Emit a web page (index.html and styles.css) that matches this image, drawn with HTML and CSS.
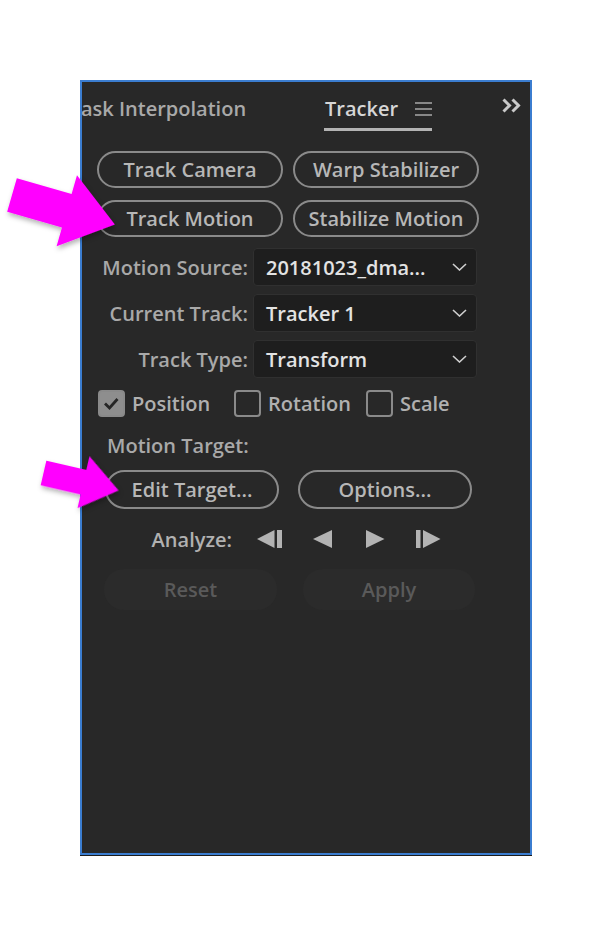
FILE: index.html
```html
<!DOCTYPE html>
<html lang="en">
<head>
<meta charset="utf-8">
<title>Tracker</title>
<link rel="stylesheet" href="styles.css">
</head>
<body>
<div class="panel">
  <div class="tabs">
    <div class="tab tab-inactive">ask Interpolation</div>
    <div class="tab tab-active">
      <span>Tracker</span>
      <svg class="menu-icon" width="17" height="14" viewBox="0 0 17 14"><path d="M0 1h17M0 7h17M0 13h17" stroke="#a8a8a8" stroke-width="1.4" fill="none"/></svg>
    </div>
    <div class="more">
      <svg width="21" height="15" viewBox="0 0 21 15"><path d="M1.5 1.5l6 6-6 6M10.5 1.5l6 6-6 6" stroke="#c9c9c9" stroke-width="3" fill="none" stroke-linejoin="miter"/></svg>
    </div>
  </div>

  <div class="content">
    <div class="row r1">
      <button class="pill">Track Camera</button>
      <button class="pill">Warp Stabilizer</button>
    </div>
    <div class="row r2">
      <button class="pill">Track Motion</button>
      <button class="pill">Stabilize Motion</button>
    </div>

    <div class="fields">
      <div class="field">
        <span class="field-label">Motion Source:</span>
        <div class="select"><span>20181023_dma...</span><svg width="15" height="8" viewBox="0 0 15 8"><path d="M1 1l6.5 6 6.5-6" stroke="#cfcfcf" stroke-width="1.6" fill="none"/></svg></div>
      </div>
      <div class="field">
        <span class="field-label">Current Track:</span>
        <div class="select"><span>Tracker 1</span><svg width="15" height="8" viewBox="0 0 15 8"><path d="M1 1l6.5 6 6.5-6" stroke="#cfcfcf" stroke-width="1.6" fill="none"/></svg></div>
      </div>
      <div class="field">
        <span class="field-label">Track Type:</span>
        <div class="select"><span>Transform</span><svg width="15" height="8" viewBox="0 0 15 8"><path d="M1 1l6.5 6 6.5-6" stroke="#cfcfcf" stroke-width="1.6" fill="none"/></svg></div>
      </div>
    </div>

    <div class="checks">
      <label class="check check-pos"><span class="box on"><svg width="23" height="23" viewBox="0 0 23 23"><path d="M5 11.5l4.5 4.5 8-9" stroke="#262626" stroke-width="2.8" fill="none"/></svg></span>Position</label>
      <label class="check check-rot"><span class="box"></span>Rotation</label>
      <label class="check"><span class="box"></span>Scale</label>
    </div>

    <div class="target-label">Motion Target:</div>

    <div class="row r3">
      <button class="pill pill-sm">Edit Target...</button>
      <button class="pill pill-sm">Options...</button>
    </div>

    <div class="analyze">
      <span class="analyze-label">Analyze:</span>
      <svg width="184" height="20" viewBox="0 0 184 20" fill="#b3b3b3">
        <path d="M0 10L17.5 1v18z"/><rect x="20" y="1" width="5" height="18"/>
        <path d="M56 10L75 1v18z"/>
        <path d="M109 1l18.5 9-18.5 9z"/>
        <rect x="159" y="1" width="4.5" height="18"/><path d="M166 1l17.5 9-17.5 9z"/>
      </svg>
    </div>

    <div class="row r4">
      <button class="ghost ghost-reset">Reset</button>
      <button class="ghost ghost-apply">Apply</button>
    </div>
  </div>
</div>

<svg class="arrows" width="612" height="935" viewBox="0 0 612 935">
  <defs>
    <filter id="sh" x="-20%" y="-20%" width="140%" height="160%">
      <feDropShadow dx="1" dy="3" stdDeviation="2.5" flood-color="#000" flood-opacity="0.3"/>
    </filter>
  </defs>
  <g filter="url(#sh)" fill="#ff00ff">
    <path transform="translate(12 195) rotate(16)" d="M0 -17.5H57V-37L107 0L57 37V17.5H0Z"/>
    <path transform="translate(43.5 473) rotate(13) scale(0.72)" d="M0 -17.5H57V-37L107 0L57 37V17.5H0Z"/>
  </g>
</svg>
</body>
</html>
```

FILE: styles.css
```css
html, body {
  margin: 0;
  padding: 0;
  background: #ffffff;
}

body {
  font-family: "Open Sans", "Liberation Sans", sans-serif;
  font-size: 20px;
  font-weight: 600;
  position: relative;
  min-height: 935px;
}

.panel {
  margin: 80px 0 0 80px;
  width: 448px;
  height: 771px;
  border: 2px solid #3b7dd0;
  background: #282828;
  overflow: hidden;
  box-shadow: 0 1px 0 #1c1c1c;
}

/* ---- tab bar ---- */
.tabs {
  display: flex;
  height: 49px;
}

.tab {
  box-sizing: border-box;
  height: 49px;
  display: flex;
  align-items: center;
  padding-top: 6px;
  padding-bottom: 3px;
  white-space: nowrap;
}

.tab-inactive {
  width: 243px;
  margin-left: -1px;
  color: #a9a9a9;
}

.tab-active {
  width: 108px;
  padding-left: 1px;
  justify-content: space-between;
  color: #d6d6d6;
  border-bottom: 3px solid #b3b3b3;
  padding-bottom: 0;
}

.menu-icon {
  margin-top: 1px;
}

.more {
  margin-left: auto;
  padding-right: 7px;
  padding-top: 16px;
}

.more svg {
  display: block;
}

/* ---- content ---- */
.content {
  padding-left: 15px;
}

.row {
  display: flex;
}

.pill {
  box-sizing: border-box;
  width: 186px;
  height: 37px;
  padding: 0;
  border: 2px solid #8a8a8a;
  border-radius: 19px;
  background: transparent;
  color: #b7b7b7;
  font-family: inherit;
  font-size: 20px;
  font-weight: inherit;
  display: flex;
  align-items: center;
  justify-content: center;
}

.r1 {
  margin-top: 20px;
  gap: 10px;
}

.r2 {
  margin-top: 12px;
  gap: 10px;
}

.fields {
  margin-top: 11px;
  display: flex;
  flex-direction: column;
  gap: 8px;
}

.field {
  display: flex;
  align-items: center;
  gap: 5px;
  height: 38px;
}

.field-label {
  width: 151px;
  text-align: right;
  color: #a9a9a9;
  white-space: nowrap;
}

.select {
  box-sizing: border-box;
  width: 224px;
  height: 38px;
  background: #1e1e1e;
  border: 1px solid #303030;
  border-radius: 4px;
  display: flex;
  align-items: center;
  justify-content: space-between;
  padding: 0 9px 0 12px;
  color: #e3e3e3;
  white-space: nowrap;
}

.checks {
  margin-top: 12px;
  margin-left: 1px;
  display: flex;
  align-items: center;
  height: 27px;
}

.check {
  display: flex;
  align-items: center;
  gap: 7px;
  color: #b0b0b0;
  white-space: nowrap;
}

.check-pos {
  width: 136px;
}

.check-rot {
  width: 132px;
}

.box {
  box-sizing: border-box;
  width: 27px;
  height: 27px;
  border: 2px solid #8a8a8a;
  border-radius: 4px;
  display: flex;
  align-items: center;
  justify-content: center;
  flex: none;
}

.box.on {
  background: #8e8e8e;
}

.target-label {
  margin-top: 15px;
  padding-left: 10px;
  height: 28px;
  line-height: 28px;
  color: #a9a9a9;
}

.r3 {
  margin-top: 10px;
  margin-left: 8px;
  gap: 19px;
}

.pill-sm {
  width: 174px;
  height: 39px;
  border-radius: 20px;
}

.analyze {
  margin-top: 20px;
  height: 20px;
  display: flex;
  align-items: center;
}

.analyze-label {
  width: 135px;
  margin-right: 25px;
  text-align: right;
  color: #b1b1b1;
}

.analyze svg {
  display: block;
}

.r4 {
  margin-top: 20px;
  margin-left: 7px;
  gap: 26px;
}

.ghost {
  box-sizing: border-box;
  height: 41px;
  padding: 0;
  border: none;
  border-radius: 20px;
  background: #2b2b2b;
  color: #5a5a5a;
  font-family: inherit;
  font-size: 20px;
  font-weight: inherit;
  display: flex;
  align-items: center;
  justify-content: center;
}

.ghost-reset {
  width: 173px;
}

.ghost-apply {
  width: 172px;
}

/* annotation overlay */
.arrows {
  position: absolute;
  top: 0;
  left: 0;
  pointer-events: none;
}
```
